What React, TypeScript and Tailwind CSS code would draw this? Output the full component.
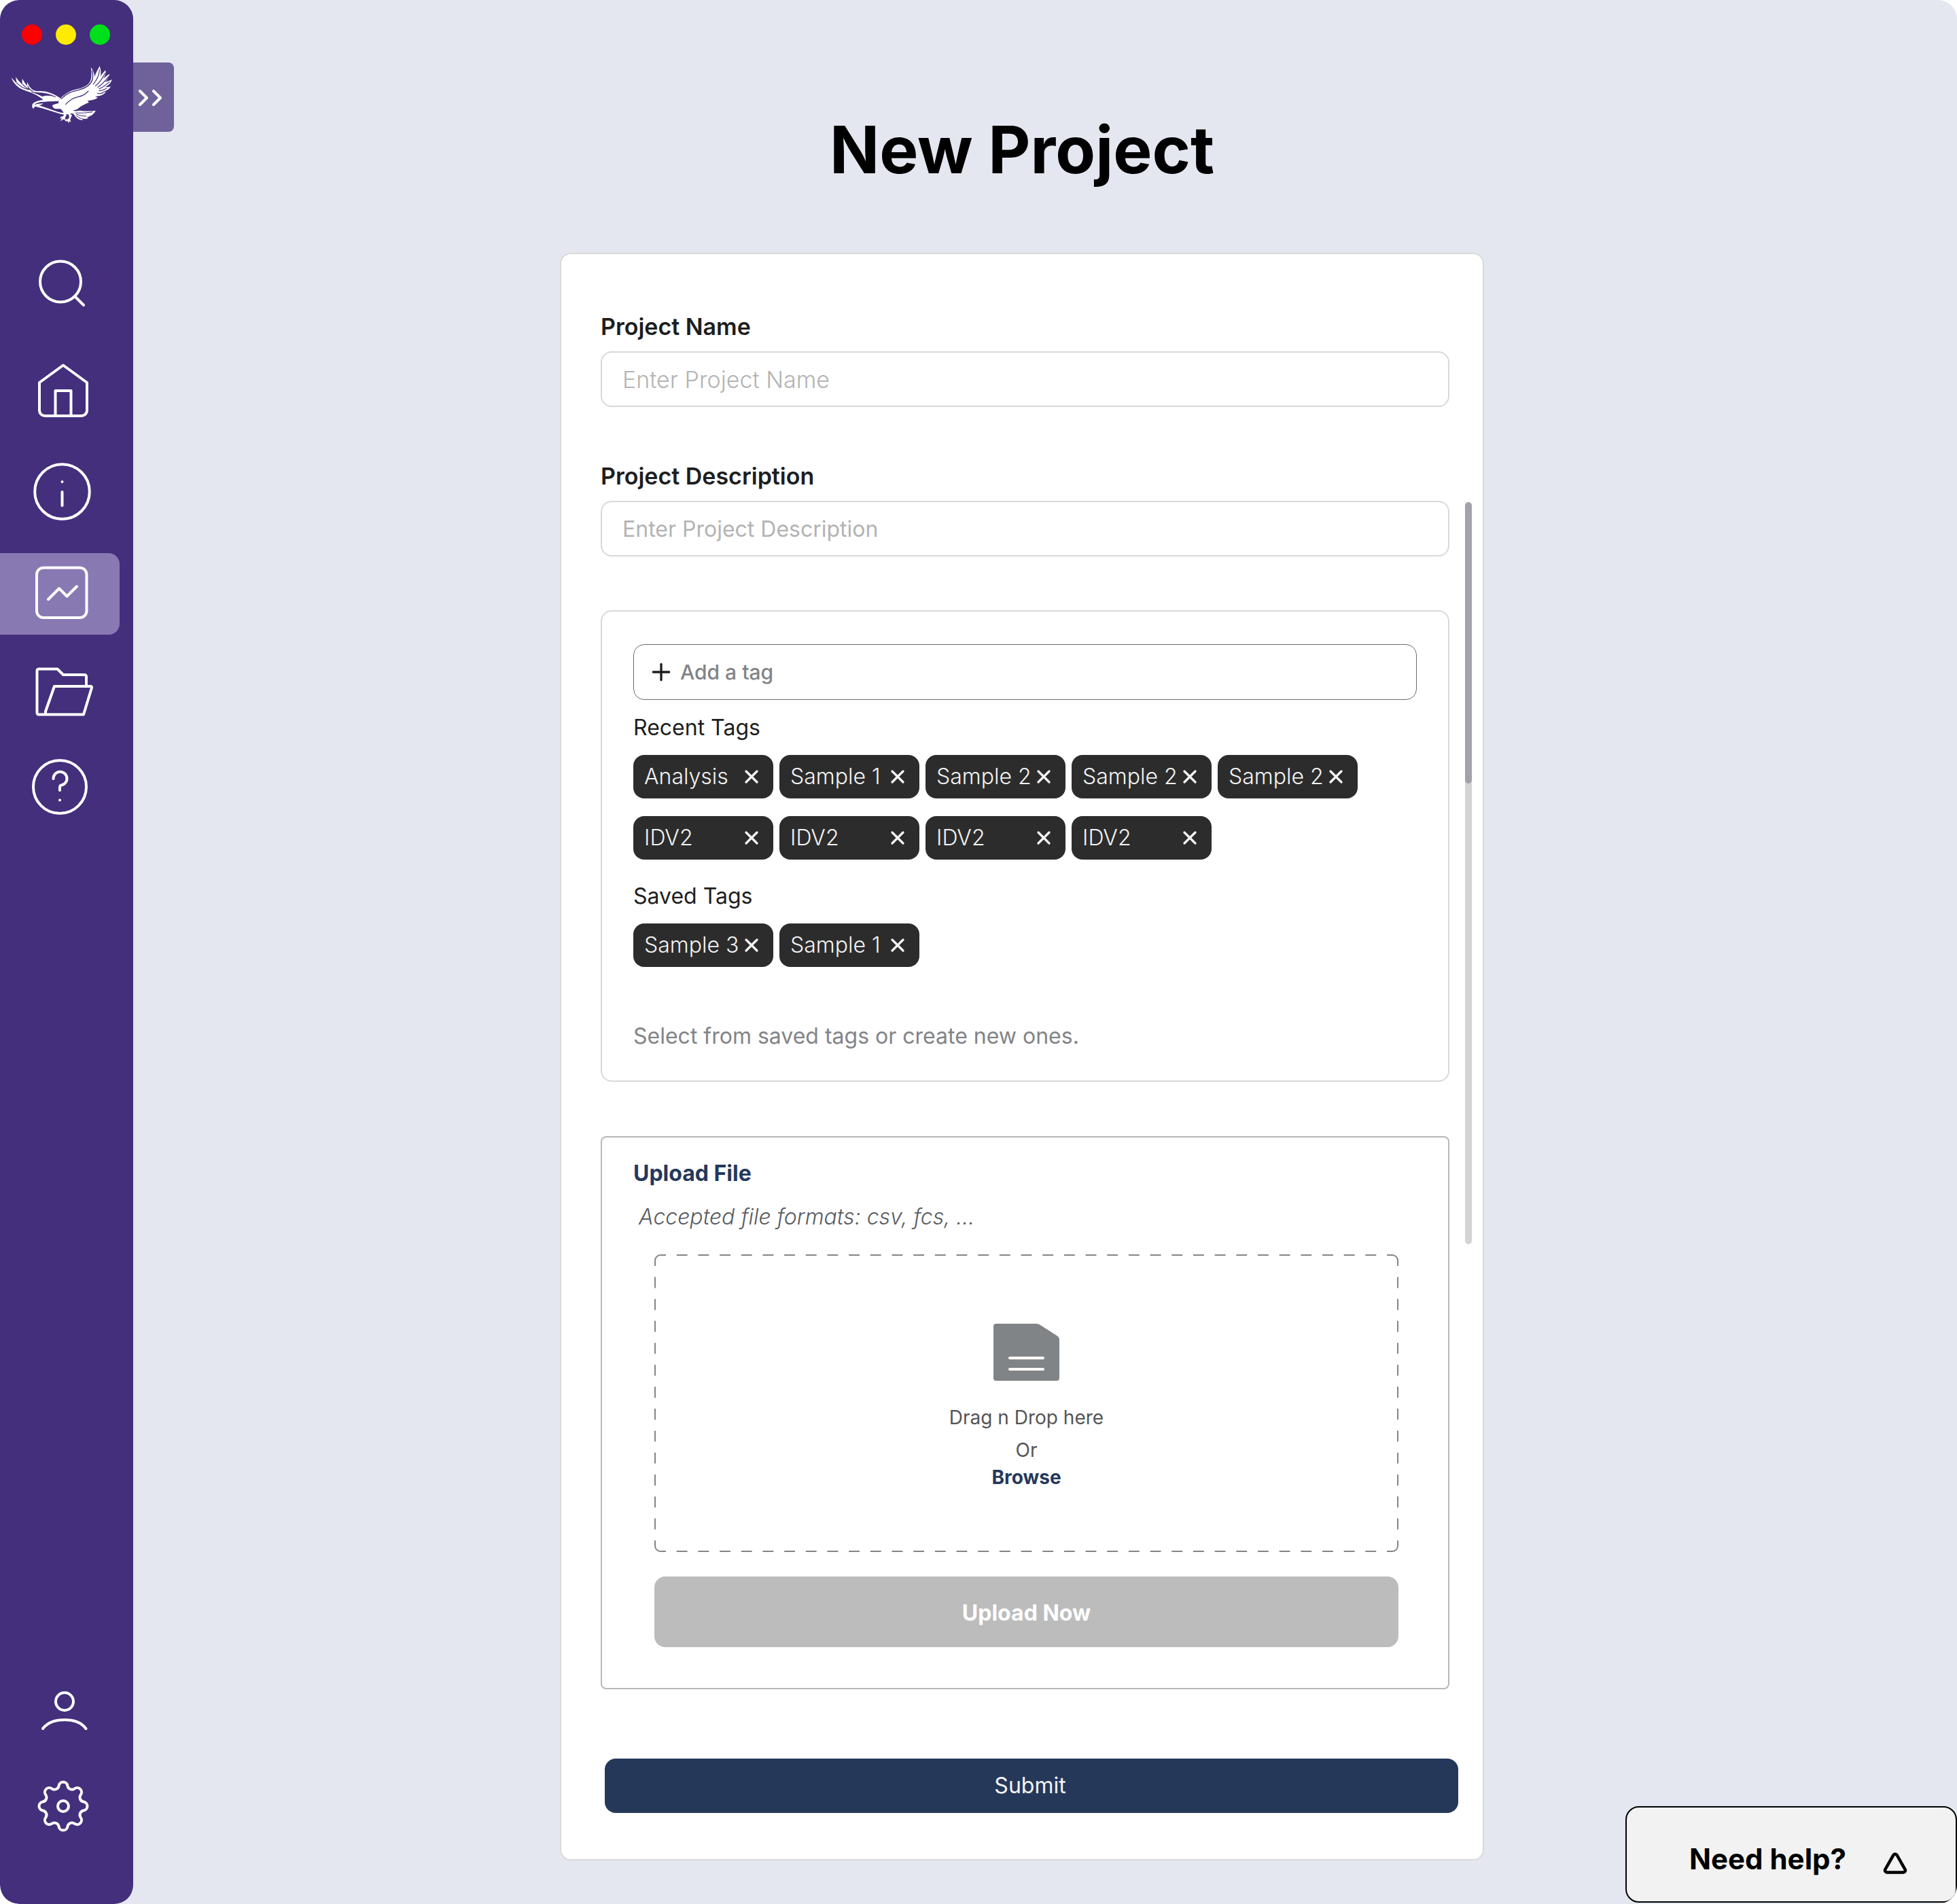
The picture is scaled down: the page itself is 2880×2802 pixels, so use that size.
import { useState } from "react";
import type { ReactNode } from "react";
import { Plus, Triangle, X } from "lucide-react";

const RECENT_TAGS = [
  "Analysis",
  "Sample 1",
  "Sample 2",
  "Sample 2",
  "Sample 2",
  "IDV2",
  "IDV2",
  "IDV2",
  "IDV2",
];
const SAVED_TAGS = ["Sample 3", "Sample 1"];

export default function App() {
  return (
    <div className="bg-white font-[Inter,sans-serif] text-[#1e1e1e]">
      <div className="relative flex min-h-screen overflow-hidden rounded-[28px] bg-[#e4e7ef]">
        <Sidebar />
        <button
          type="button"
          aria-label="Expand sidebar"
          className="absolute left-[196px] top-[92px] flex h-[102px] w-[60px] items-center rounded-r-lg bg-[#6f629b] pl-2 pt-0.5"
        >
          <svg viewBox="0 0 36 24" className="h-6 w-9" fill="none" stroke="#fff" strokeWidth="4" strokeLinecap="round" strokeLinejoin="round">
            <path d="M2 2l10 10L2 22M22 2l10 10-10 10" />
          </svg>
        </button>

        <main className="flex flex-1 flex-col items-center pb-16 pr-[68px] pt-[172px]">
          <h1 className="mb-[104px] text-8xl font-bold leading-none text-black">
            New Project
          </h1>
          <ProjectForm />
        </main>

        <button
          type="button"
          className="absolute bottom-0.5 right-0 flex h-[142px] w-[488px] items-center justify-end gap-[54px] rounded-[20px] border-2 border-black bg-[#f2f2f2] pr-[71px] pt-3.5 text-black"
        >
          <span className="text-[42px] font-bold leading-none">Need help?</span>
          <Triangle className="mt-3 h-9 w-9" strokeWidth={3} aria-hidden="true" />
        </button>
      </div>
    </div>
  );
}

function Sidebar() {
  return (
    <aside className="flex w-[196px] shrink-0 flex-col rounded-[28px] bg-[#432f7c] pb-[83px] pt-9">
      <div className="flex gap-5 pl-8">
        <span className="h-[30px] w-[30px] rounded-full bg-[#ff0000]" />
        <span className="h-[30px] w-[30px] rounded-full bg-[#ffea00]" />
        <span className="h-[30px] w-[30px] rounded-full bg-[#00e01a]" />
      </div>
      <EagleLogo />

      <nav className="mt-[188px] flex flex-col gap-7">
        <NavItem label="Search">
          <circle cx="89" cy="44.500" r="30" />
          <path d="M110 66l13 13" />
        </NavItem>
        <NavItem label="Home">
          <path d="M93 19.500l35 25.500v41a8 8 0 0 1-8 8H66a8 8 0 0 1-8-8V45z" />
          <path d="M81.500 94V57h23v37" />
        </NavItem>
        <NavItem label="Information">
          <circle cx="91.500" cy="57.500" r="40.300" />
          <path d="M91.500 58v20M91.500 43v.1" />
        </NavItem>
        <NavItem label="Analytics" active>
          <rect x="54" y="21.500" width="73.500" height="73.500" rx="10" />
          <path d="M71 68l16-16 11.500 11.500L113 49" />
        </NavItem>
        <NavItem label="Projects">
          <path d="M127 46V33a3 3 0 0 0-2-2H93l-8.500-8.500H57a3 3 0 0 0-2.500 2.500v62a2.500 2.500 0 0 0 2.500 2.500h66L135 50a1.500 1.500 0 0 0-1.500-2H80L67 85v3" />
        </NavItem>
        <NavItem label="Help">
          <circle cx="88" cy="48" r="39" />
          <path d="M78.500 36a10 10 0 1 1 12 9.500q-2.500.5-2.500 3V53M88 67.500v.1" />
        </NavItem>
      </nav>

      <div className="mt-auto flex flex-col gap-5">
        <NavItem label="Account">
          <circle cx="95" cy="45" r="13" />
          <path d="M63 85q9.500-13 32-13t31.500 13" />
        </NavItem>
        <NavItem label="Settings">
          <path d={gearPath(93, 59)} />
          <circle cx="93" cy="59" r="8" />
        </NavItem>
      </div>
    </aside>
  );
}

// Eight round teeth joined by round notches, all arcs of the same radius
function gearPath(cx: number, cy: number) {
  const at = (angle: number) =>
    `${(cx + 30.6 * Math.cos(angle)).toFixed(2)} ${(cy + 30.6 * Math.sin(angle)).toFixed(2)}`;
  const half = 0.212;
  let d = `M${at(-half)}`;
  for (let i = 0; i < 8; i++) {
    const tooth = (i * Math.PI) / 4;
    d += `A6.500 6.500 0 0 1 ${at(tooth + half)}`;
    d += `A6.500 6.500 0 0 0 ${at(tooth + Math.PI / 4 - half)}`;
  }
  return `${d}Z`;
}

function NavItem({
  label,
  active,
  children,
}: {
  label: string;
  active?: boolean;
  children: ReactNode;
}) {
  return (
    <button
      type="button"
      aria-label={label}
      aria-current={active ? "page" : undefined}
      className={`h-30 w-44 rounded-r-2xl ${active ? "bg-[#8879b3]" : ""}`}
    >
      <svg
        viewBox="0 0 176 120"
        className="h-30 w-44"
        fill="none"
        stroke="#fff"
        strokeWidth="4"
        strokeLinecap="round"
        strokeLinejoin="round"
        aria-hidden="true"
      >
        {children}
      </svg>
    </button>
  );
}

function EagleLogo() {
  return (
    <svg viewBox="48 288 450 258" className="ml-4 mt-[30px] h-[86px] w-[150px]" aria-label="Eagle logo" role="img">
      <g fill="#fff">
        {/* far wing */}
        <path d="M51 343C58 352 66 361 76 370C72 360 70 350 70 340C78 353 88 364 101 376C97 366 97 357 99 348C106 360 112 370 120 380C119 374 119 369 121 363C125 375 131 385 140 393C150 401 163 403 176 402C207 401 239 414 266 433L260 446C239 447 218 447 199 449C192 449 186 448 182 446C189 444 192 441 187 437C168 422 146 411 124 404C104 398 87 391 73 378C61 366 53 355 51 343Z" />
        {/* head and belly line */}
        <path d="M200 442C180 441 158 446 146 456C140 462 141 471 145 479L151 477C151 472 154 469 160 471L191 479L258 500C270 504 281 506 290 505L300 496C285 499 270 498 257 494L192 472L171 464C183 463 189 460 190 455L180 458C170 457 160 460 152 464C157 454 174 449 200 449Z" />
        {/* body and near wing */}
        <path d="M231 465C238 461 249 458 258 456C257 446 263 438 272 429C292 410 315 398 342 393C370 387 389 376 398 359C407 342 402 320 402 298C410 310 416 324 418 338C423 322 431 308 440 292C446 309 447 322 443 337C449 328 457 319 466 310C468 325 463 337 456 348C464 340 473 333 484 326C481 341 473 353 463 363C474 359 484 356 494 351C490 367 477 379 462 386C472 385 480 385 489 382C481 396 466 404 449 406C456 408 462 407 468 406C456 421 438 426 420 425L432 432C418 441 402 443 386 445L393 452C376 459 358 466 341 482L322 488C331 492 337 490 352 488C375 491 398 492 422 488C415 504 401 513 383 518L391 521C381 526 371 526 362 523L366 530C352 530 340 524 333 515L325 503C319 500 314 501 308 505L290 505C279 500 276 487 267 481L242 480C236 477 231 472 231 465Z" />
        {/* claws */}
        <path d="M283 503L279 514C271 512 266 517 265 524L274 520L267 535L281 526L286 532L288 520L294 506ZM302 502L306 518L299 527L289 526L288 536L297 533L303 544L306 535L313 539L310 527L318 508Z" />
      </g>
      <g fill="none" stroke="#432f7c" strokeWidth="3.500" strokeLinecap="round">
        <path d="M75 367C91 383 108 392 126 395M101 373C110 384 120 391 132 395M123 381Q129 395 144 402" />
        <path d="M140 406C162 411 210 406 246 429C232 421 205 419 186 425C172 418 156 411 140 406Z" fill="#432f7c" strokeWidth="2" />
        <path d="M271 436C296 409 320 403 348 397C380 389 400 375 408 352C411 340 409 323 406 312" strokeWidth="4" />
        <path d="M290 461C310 438 325 433 343 428C365 424 378 416 390 402" />
        <path d="M439 308C438 333 424 357 412 372M463 324C451 350 436 368 422 379M480 337C461 362 446 376 432 385M483 361C464 379 452 386 438 392M470 391Q454 400 438 401M455 410Q440 415 430 412" />
        <path d="M334 499Q370 500 407 495M338 505Q357 513 380 513M337 511Q346 520 360 524" strokeWidth="3" />
      </g>
    </svg>
  );
}

function ProjectForm() {
  return (
    <form
      onSubmit={(e) => e.preventDefault()}
      className="relative w-full max-w-[1360px] rounded-2xl border-2 border-[#d9d9d9] bg-white pb-[68px] pl-[58px] pr-[49px] pt-[87px]"
    >
      <TextField
        id="project-name"
        label="Project Name"
        placeholder="Enter Project Name"
        inputClassName="text-[34px] font-light"
      />
      <div className="mt-[82px]">
        <TextField
          id="project-description"
          label="Project Description"
          placeholder="Enter Project Description"
          inputClassName="text-[32px]"
        />
      </div>
      <TagsPanel />
      <UploadPanel />
      <button
        type="submit"
        className="ml-1.5 mt-[102px] block h-20 w-[calc(100%+7px)] rounded-2xl bg-[#25385a] pr-1 text-[32px] leading-10 text-[#f3f3f3]"
      >
        Submit
      </button>

      {/* Scroll indicator */}
      <div className="absolute right-4 top-[365px] h-[1092px] w-2.5 rounded-full bg-[#d4d4d4]" aria-hidden="true">
        <div className="h-[414px] rounded-full bg-[#a3a2aa]" />
      </div>
    </form>
  );
}

function TextField({
  id,
  label,
  placeholder,
  inputClassName,
}: {
  id: string;
  label: string;
  placeholder: string;
  inputClassName: string;
}) {
  return (
    <div className="flex flex-col gap-4">
      <label htmlFor={id} className="text-[34px] font-semibold leading-10">
        {label}
      </label>
      <input
        id={id}
        type="text"
        placeholder={placeholder}
        className={`h-[82px] w-full rounded-2xl border-2 border-[#d9d9d9] bg-white px-[30px] placeholder:text-[#b3b3b3] ${inputClassName}`}
      />
    </div>
  );
}

function TagsPanel() {
  const [recent, setRecent] = useState(RECENT_TAGS);
  const [saved, setSaved] = useState(SAVED_TAGS);

  return (
    <section className="mt-[79px] rounded-2xl border-2 border-[#d9d9d9] px-[46px] pb-[45px] pt-12">
      <div className="flex h-[82px] items-center gap-2 rounded-2xl border border-[#6b6b70] pl-5">
        <Plus className="h-10 w-10 text-[#1e1e1e]" strokeWidth={2} aria-hidden="true" />
        <input
          type="text"
          aria-label="Add a tag"
          placeholder="Add a tag"
          className="min-w-0 flex-1 bg-transparent text-[30px] font-medium outline-none placeholder:text-[#828487]"
        />
      </div>
      <h2 className="mt-[21px] text-[32px] leading-10">Recent Tags</h2>
      <TagList tags={recent} onRemove={(i) => setRecent(recent.filter((_, n) => n !== i))} />
      <h2 className="mt-[34px] text-[32px] leading-10">Saved Tags</h2>
      <TagList tags={saved} onRemove={(i) => setSaved(saved.filter((_, n) => n !== i))} />
      <p className="mt-[82px] text-[32px] leading-10 text-[#828487]">
        Select from saved tags or create new ones.
      </p>
    </section>
  );
}

function TagList({
  tags,
  onRemove,
}: {
  tags: string[];
  onRemove: (index: number) => void;
}) {
  return (
    <ul className="mt-5 flex flex-wrap gap-x-[9px] gap-y-[26px]">
      {tags.map((tag, i) => (
        <li
          key={i}
          className="flex h-16 w-[206px] items-center justify-between rounded-2xl bg-[#2c2c2c] px-4 text-[#f3f3f3]"
        >
          <span className="whitespace-nowrap text-[32px] font-light leading-10">{tag}</span>
          <button type="button" aria-label={`Remove ${tag}`} onClick={() => onRemove(i)}>
            <X className="h-8 w-8" strokeWidth={2.5} aria-hidden="true" />
          </button>
        </li>
      ))}
    </ul>
  );
}

function UploadPanel() {
  return (
    <section className="mt-20 rounded-lg border-2 border-[#b8b8b8] px-[46px] pb-[60px] pt-[33px]">
      <h2 className="text-[32px] font-bold leading-10 text-[#25385a]">Upload File</h2>
      <p className="mt-6 pl-2 text-[32px] font-light italic leading-10 text-[#5a5c5f]">
        Accepted file formats: csv, fcs, ...
      </p>

      <div className="ml-[31px] mr-[27px] mt-[35px]">
        <div className="relative flex h-[438px] flex-col items-center pt-[102px] text-[28px] leading-8 text-[#555555]">
          <DashedFrame />
          <svg viewBox="0 0 97 84" className="h-[84px] w-[97px]" aria-hidden="true">
            <path d="M4 0h59q3 0 6 2l25 16q3 2 3 6v56a4 4 0 0 1-4 4H4a4 4 0 0 1-4-4V4a4 4 0 0 1 4-4z" fill="#808487" />
            <path d="M24 50.500h49M24 67h49" stroke="#fff" strokeWidth="4" strokeLinecap="round" />
          </svg>
          <p className="mt-[38px]">Drag n Drop here</p>
          <p className="mt-4">Or</p>
          <button type="button" className="relative mt-2 font-bold text-[#25385a]">
            Browse
          </button>
        </div>
        <button
          type="button"
          className="mt-9 block h-[104px] w-full rounded-2xl bg-[#bcbcbc] pt-1 text-[32px] font-bold leading-10 text-white"
        >
          Upload Now
        </button>
      </div>
    </section>
  );
}

function DashedFrame() {
  return (
    <svg
      viewBox="0 0 1094 438"
      preserveAspectRatio="none"
      className="absolute inset-0 h-full w-full"
      fill="none"
      stroke="#828487"
      strokeWidth="2"
      aria-hidden="true"
    >
      <path d="M1 9a8 8 0 0 1 8-8M1085 1a8 8 0 0 1 8 8M1093 429a8 8 0 0 1-8 8M9 437a8 8 0 0 1-8-8" />
      <path d="M9 1h1076" pathLength={68} strokeDasharray="1 1" strokeDashoffset="0.5" />
      <path d="M9 437h1076" pathLength={68} strokeDasharray="1 1" strokeDashoffset="0.5" />
      <path d="M1 9v420" pathLength={26} strokeDasharray="1 1" strokeDashoffset="0.5" />
      <path d="M1093 9v420" pathLength={26} strokeDasharray="1 1" strokeDashoffset="0.5" />
    </svg>
  );
}
